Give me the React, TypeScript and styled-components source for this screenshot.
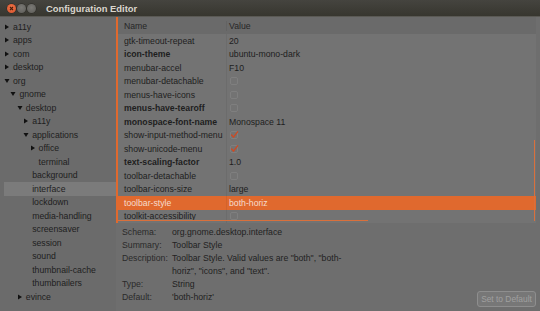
import styled, { createGlobalStyle } from 'styled-components';

const GlobalStyle = createGlobalStyle`
  html, body {
    margin: 0;
    padding: 0;
    background: #6e6e6e;
  }

  body {
    font-family: 'Liberation Sans', Arial, sans-serif;
    font-size: 8.7px;
    color: #1e1e1e;
  }
`;

type TreeItem = {
  label: string;
  level: number;
  expander?: 'open' | 'closed';
  selected?: boolean;
};

const tree: TreeItem[] = [
  { label: 'a11y', level: 0, expander: 'closed' },
  { label: 'apps', level: 0, expander: 'closed' },
  { label: 'com', level: 0, expander: 'closed' },
  { label: 'desktop', level: 0, expander: 'closed' },
  { label: 'org', level: 0, expander: 'open' },
  { label: 'gnome', level: 1, expander: 'open' },
  { label: 'desktop', level: 2, expander: 'open' },
  { label: 'a11y', level: 3, expander: 'closed' },
  { label: 'applications', level: 3, expander: 'open' },
  { label: 'office', level: 4, expander: 'closed' },
  { label: 'terminal', level: 4 },
  { label: 'background', level: 3 },
  { label: 'interface', level: 3, selected: true },
  { label: 'lockdown', level: 3 },
  { label: 'media-handling', level: 3 },
  { label: 'screensaver', level: 3 },
  { label: 'session', level: 3 },
  { label: 'sound', level: 3 },
  { label: 'thumbnail-cache', level: 3 },
  { label: 'thumbnailers', level: 3 },
  { label: 'evince', level: 2, expander: 'closed' },
];

type Key = {
  name: string;
  value?: string;
  check?: boolean;
  bold?: boolean;
  selected?: boolean;
};

const keys: Key[] = [
  { name: 'gtk-timeout-repeat', value: '20' },
  { name: 'icon-theme', value: 'ubuntu-mono-dark', bold: true },
  { name: 'menubar-accel', value: 'F10' },
  { name: 'menubar-detachable', check: false },
  { name: 'menus-have-icons', check: false },
  { name: 'menus-have-tearoff', check: false, bold: true },
  { name: 'monospace-font-name', value: 'Monospace 11', bold: true },
  { name: 'show-input-method-menu', check: true },
  { name: 'show-unicode-menu', check: true },
  { name: 'text-scaling-factor', value: '1.0', bold: true },
  { name: 'toolbar-detachable', check: false },
  { name: 'toolbar-icons-size', value: 'large' },
  { name: 'toolbar-style', value: 'both-horiz', selected: true },
  { name: 'toolkit-accessibility', check: false },
];

const Expander = ({ state }: { state?: 'open' | 'closed' }) => (
  <ExpanderBox>
    {state && (
      <svg width="6" height="6" viewBox="0 0 6 6">
        {state === 'closed' ? (
          <polygon points="1,0.5 5,3 1,5.5" fill="#111" />
        ) : (
          <polygon points="0.5,1 5.5,1 3,5" fill="#111" />
        )}
      </svg>
    )}
  </ExpanderBox>
);

const CheckBox = ({ checked }: { checked: boolean }) => (
  <svg width="10" height="10" viewBox="0 0 10 10">
    <rect x="1.5" y="1.5" width="7" height="7" rx="1.5" fill="none" stroke="#7f7f7f" />
    {checked && (
      <path
        d="M2.6 5 L4.5 7.2 L8.6 1.8"
        fill="none"
        stroke="#cf4a22"
        strokeWidth="1.3"
        strokeLinecap="round"
        strokeLinejoin="round"
      />
    )}
  </svg>
);

const App = () => (
  <>
    <GlobalStyle />
    <Window>
      <TitleBar>
        <WinButton $close>
          <svg width="9" height="9" viewBox="0 0 9 9">
            <path d="M3 3 L6 6 M6 3 L3 6" stroke="#4a1e0c" strokeWidth="1.1" />
          </svg>
        </WinButton>
        <WinButton />
        <WinButton />
        <Title>Configuration Editor</Title>
      </TitleBar>
      <Body>
        <Tree>
          {tree.map((item, i) => (
            <TreeRow key={i} $level={item.level} $selected={item.selected}>
              <Expander state={item.expander} />
              {item.label}
            </TreeRow>
          ))}
        </Tree>
        <Main>
          <KeyList>
            <HeaderRow>
              <NameCell>Name</NameCell>
              <ValueCell>Value</ValueCell>
            </HeaderRow>
            {keys.map((k) => (
              <KeyRow key={k.name} $selected={k.selected}>
                <NameCell $bold={k.bold}>{k.name}</NameCell>
                <ValueCell>
                  {k.check === undefined ? k.value : <CheckBox checked={k.check} />}
                </ValueCell>
              </KeyRow>
            ))}
          </KeyList>
          <DetailsArea>
            <Details>
              <Label>Schema:</Label>
              <Value>org.gnome.desktop.interface</Value>
              <Label>Summary:</Label>
              <Value>Toolbar Style</Value>
              <Label>Description:</Label>
              <Value>
                Toolbar Style. Valid values are "both", "both-
                <br />
                horiz", "icons", and "text".
              </Value>
              <Label>Type:</Label>
              <Value>String</Value>
              <Label>Default:</Label>
              <Value>'both-horiz'</Value>
            </Details>
            <DefaultButton disabled>Set to Default</DefaultButton>
          </DetailsArea>
        </Main>
      </Body>
    </Window>
  </>
);

export default App;

const Window = styled.div`
  display: flex;
  flex-direction: column;
  width: 540px;
  height: 311px;
  overflow: hidden;
  background: #6e6e6e;
`;

const TitleBar = styled.div`
  display: flex;
  align-items: center;
  gap: 1px;
  height: 17px;
  padding-left: 7px;
  background: linear-gradient(#45443f, #37362f);
  border-bottom: 1px solid #5a5954;
  box-sizing: border-box;
`;

const WinButton = styled.span<{ $close?: boolean }>`
  display: flex;
  width: 9px;
  height: 9px;
  border-radius: 50%;
  background: ${({ $close }) =>
    $close
      ? 'radial-gradient(circle at 50% 40%, #f0764a, #d5502a)'
      : 'radial-gradient(circle at 50% 40%, #7a7975, #5c5b57)'};
  box-shadow: 0 0 0 0.5px #2c2b28;
`;

const Title = styled.span`
  margin-left: 9px;
  font-size: 9.4px;
  font-weight: bold;
  color: #dad6ce;
`;

const Body = styled.div`
  display: flex;
  flex: 1;
  min-height: 0;
`;

const Tree = styled.div`
  display: flex;
  flex-direction: column;
  width: 116px;
  padding: 3px 0 0 4px;
  box-sizing: border-box;
  background: #6b6b6b;
`;

const TreeRow = styled.div<{ $level: number; $selected?: boolean }>`
  display: flex;
  align-items: center;
  height: 13.5px;
  padding-left: ${({ $level }) => $level * 6.4}px;
  background: ${({ $selected }) => ($selected ? '#7b7b7b' : 'transparent')};
  white-space: nowrap;
`;

const ExpanderBox = styled.span`
  display: flex;
  align-items: center;
  width: 9px;
  height: 100%;
`;

const Main = styled.div`
  display: flex;
  flex-direction: column;
  flex: 1;
  padding-right: 4px;
`;

const KeyList = styled.div`
  position: relative;
  border-left: 2px solid #e0692e;
  background: #737373;

  &::before {
    content: '';
    position: absolute;
    top: 123px;
    right: 1px;
    bottom: 2px;
    width: 1.5px;
    background: #d9703c;
  }

  &::after {
    content: '';
    position: absolute;
    left: 0;
    bottom: 2px;
    width: 250px;
    height: 1.5px;
    background: #d9703c;
  }
`;

const HeaderRow = styled.div`
  display: grid;
  grid-template-columns: 108px 1fr;
  align-items: center;
  height: 17px;
  background: #6a6a6a;
  color: #262626;
`;

const KeyRow = styled.div<{ $selected?: boolean }>`
  display: grid;
  grid-template-columns: 108px 1fr;
  height: 13.5px;
  background: ${({ $selected }) => ($selected ? '#e0692e' : 'transparent')};
  color: ${({ $selected }) => ($selected ? '#f6dccd' : '#1e1e1e')};
`;

const NameCell = styled.div<{ $bold?: boolean }>`
  display: flex;
  align-items: center;
  padding-left: 6px;
  font-weight: ${({ $bold }) => ($bold ? 'bold' : 'normal')};
  white-space: nowrap;
  overflow: hidden;
`;

const ValueCell = styled.div`
  display: flex;
  align-items: center;
  padding-left: 2px;
  border-left: 1px solid rgba(0, 0, 0, 0.06);
  white-space: nowrap;
`;

const DetailsArea = styled.div`
  display: flex;
  justify-content: space-between;
  align-items: flex-end;
  flex: 1;
  padding: 2.5px 0 4px 6px;
`;

const Details = styled.div`
  display: grid;
  grid-template-columns: 50px 1fr;
  line-height: 13px;
  align-self: flex-start;
`;

const Label = styled.span`
  color: #2a2a2a;
`;

const Value = styled.span`
  color: #222;
`;

const DefaultButton = styled.button`
  width: 59px;
  height: 16px;
  padding: 0;
  font-family: inherit;
  font-size: 8.4px;
  color: #a0a0a0;
  background: #777;
  border: 1px solid #8e8e8e;
  border-radius: 3px;
`;
